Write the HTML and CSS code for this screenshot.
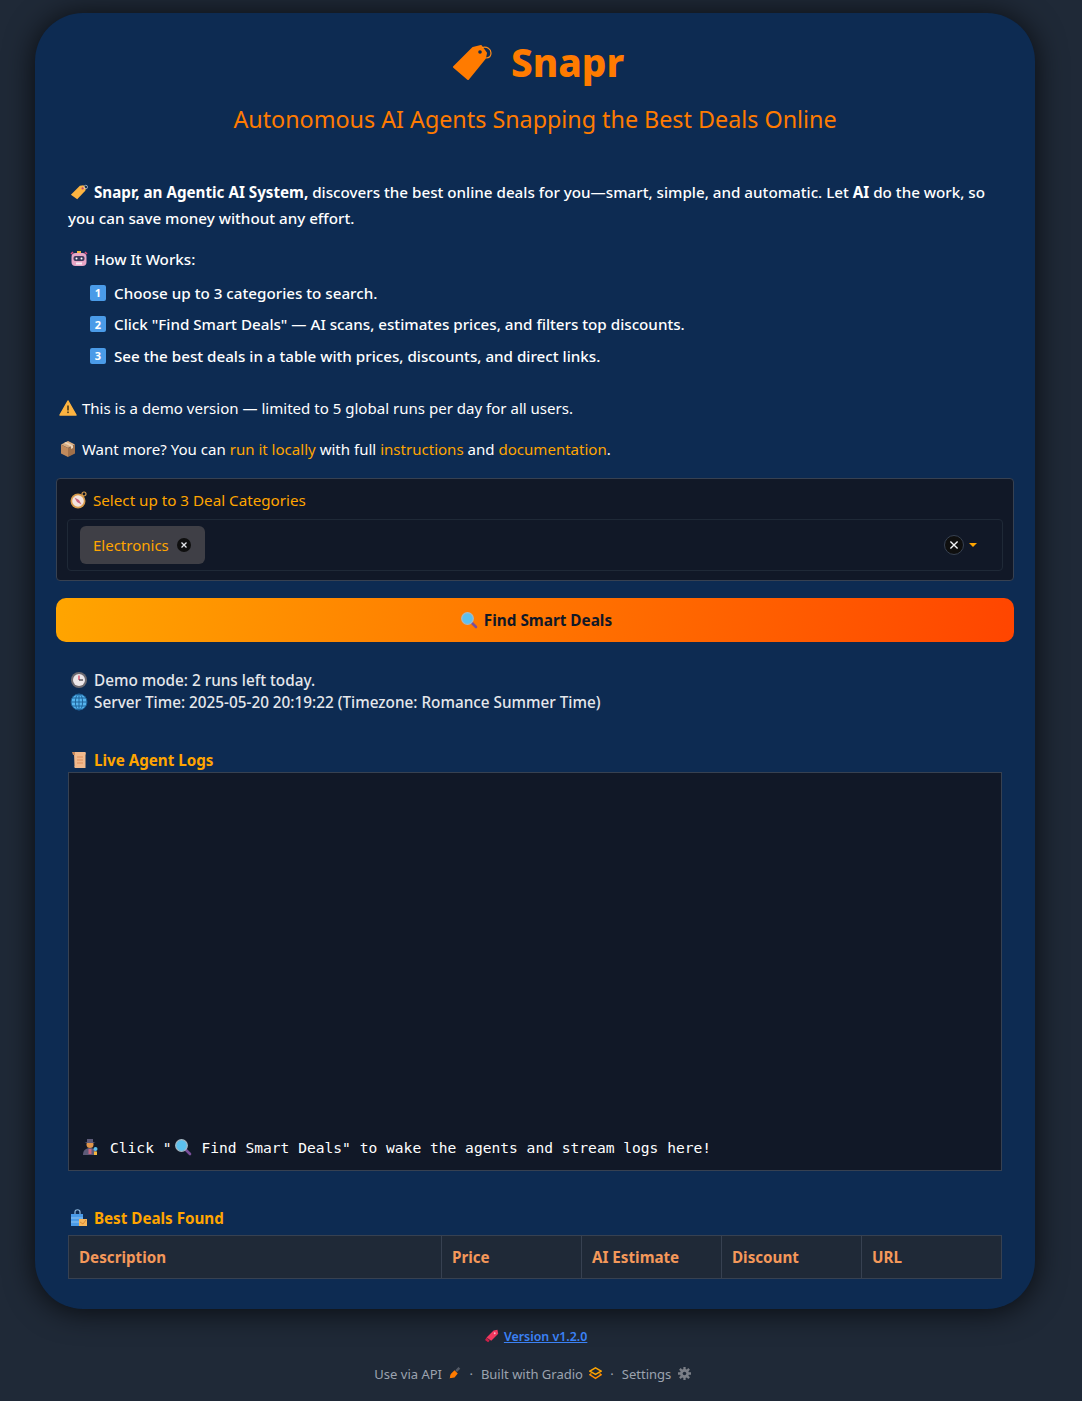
FILE: index.html
```html
<!DOCTYPE html>
<html lang="en">
<head>
  <meta charset="UTF-8">
  <title>Snapr</title>
  <link rel="stylesheet" href="styles.css">
</head>
<body>

  <div class="container">

    <div class="title-row">
      <svg class="title-icon" viewBox="0 0 40 36">
        <path d="M1 22 20 3 28 1 33 8 32 13 15 34Z" fill="#ff7b00" stroke="#ff7b00" stroke-linejoin="round" stroke-width="2"/>
        <circle cx="27" cy="7" r="1.800" fill="#0d2b52"/>
        <path d="M29 2.500C34 1 38 4 38 8 38 11 36 13 33 13" fill="none" stroke="#ff8c1a" stroke-width="1.200"/>
      </svg>
      <h1>Snapr</h1>
    </div>
    <h2>Autonomous AI Agents Snapping the Best Deals Online</h2>

    <div class="intro">
      <p class="intro-text">
        <svg class="emoji" viewBox="0 0 40 36"><path d="M2 24 22 4 30 3 35 10 34 15 16 34Z" fill="#fdb441"/><circle cx="28" cy="10" r="2.500" fill="#c2456e"/><circle cx="35" cy="7" r="4" fill="none" stroke="#cfd8dc" stroke-width="1.500"/></svg>
        <b>Snapr, an Agentic AI System,</b> discovers the best online deals for you—smart, simple, and automatic. Let <b>AI</b> do the work, so you can save money without any effort.
      </p>
      <p class="how">
        <svg class="emoji" viewBox="0 0 18 18"><path d="M1 4 3 2M17 4 15 2" stroke="#e0487a" stroke-width="1.500"/><rect x="7" y="1" width="4" height="2" fill="#f5b83d"/><rect x="1.500" y="3" width="15" height="13" rx="4" fill="#e7a6c6"/><rect x="3.500" y="6" width="11" height="5" rx="2" fill="#3d3a5c"/><circle cx="6.500" cy="8.500" r="1" fill="#fff"/><circle cx="11.500" cy="8.500" r="1" fill="#fff"/><rect x="6" y="12.500" width="6" height="2" fill="#f7eef5"/></svg>
        How It Works:
      </p>
      <ul class="steps">
        <li><span class="keycap">1</span>Choose up to 3 categories to search.</li>
        <li><span class="keycap">2</span>Click "Find Smart Deals" — AI scans, estimates prices, and filters top discounts.</li>
        <li><span class="keycap">3</span>See the best deals in a table with prices, discounts, and direct links.</li>
      </ul>
    </div>

    <p class="note note-first">
      <svg class="emoji" viewBox="0 0 18 18"><path d="M9 2 17 16H1Z" fill="#fdb441" stroke="#fdb441" stroke-linejoin="round" stroke-width="1.500"/><rect x="8.200" y="6.500" width="1.600" height="5" fill="#4a3a1a"/><rect x="8.200" y="12.500" width="1.600" height="1.600" fill="#4a3a1a"/></svg>
      This is a demo version — limited to 5 global runs per day for all users.
    </p>
    <p class="note">
      <svg class="emoji" viewBox="0 0 18 18"><path d="M9 1 16 4.500 9 8 2 4.500Z" fill="#d9ad82"/><path d="M2 4.500 9 8V17L2 13.500Z" fill="#c08a5c"/><path d="M16 4.500 9 8V17L16 13.500Z" fill="#a0704a"/><path d="M5 3 12 6.500V9L14 8V5.500L7 2Z" fill="#ecd4b8"/></svg>
      Want more? You can <a href="#">run it locally</a> with full <a href="#">instructions</a> and <a href="#">documentation</a>.
    </p>

    <div class="category-panel">
      <div class="category-label">
        <svg class="emoji" viewBox="0 0 18 18"><circle cx="9" cy="10" r="7.500" fill="#d69a4a"/><circle cx="9" cy="10" r="5.800" fill="#f3e3de"/><path d="M5.500 6.500 10 9 12.500 13.500 8 11Z" fill="#c9647e"/><circle cx="15" cy="3" r="2" fill="none" stroke="#d69a4a" stroke-width="1.200"/></svg>
        Select up to 3 Deal Categories
      </div>
      <div class="category-input">
        <span class="chip">Electronics
          <span class="chip-x"><svg viewBox="0 0 14 14"><path d="M4.500 4.500 9.500 9.500M9.500 4.500 4.500 9.500" stroke="#e5e7eb" stroke-width="1.300"/></svg></span>
        </span>
        <span class="clear-all"><svg viewBox="0 0 20 20"><path d="M6 6 14 14M14 6 6 14" stroke="#f3f4f6" stroke-width="1.500"/></svg></span>
        <span class="caret"></span>
      </div>
    </div>

    <button class="find-btn">
      <svg class="emoji" viewBox="0 0 18 18"><path d="M11 11 16 16" stroke="#7a4f9a" stroke-width="2.600" stroke-linecap="round"/><circle cx="7.500" cy="7.500" r="5.800" fill="#5cc0ee" stroke="#a6b8c4" stroke-width="1.300"/></svg>
      Find Smart Deals
    </button>

    <div class="status">
      <div>
        <svg class="emoji" viewBox="0 0 18 18"><circle cx="9" cy="9" r="8" fill="#6d6a70"/><circle cx="9" cy="9" r="6" fill="#ece7ea"/><path d="M9 4.500V9" stroke="#d8455f" stroke-width="1.300"/><path d="M9 9H13" stroke="#44424a" stroke-width="1.300"/></svg>
        Demo mode: 2 runs left today.
      </div>
      <div>
        <svg class="emoji" viewBox="0 0 18 18"><circle cx="9" cy="9" r="8" fill="#55b4ee"/><g fill="none" stroke="#1b5e94" stroke-width=".9"><circle cx="9" cy="9" r="8"/><ellipse cx="9" cy="9" rx="3.600" ry="8"/><path d="M1 9H17M2.200 5H15.800M2.200 13H15.800M9 1V17"/></g></svg>
        Server Time: 2025-05-20 20:19:22 (Timezone: Romance Summer Time)
      </div>
    </div>

    <h3 class="section-title section-logs">
      <svg class="emoji" viewBox="0 0 18 18"><path d="M4 1H15C16 1 16 3 15.500 4V17H6C4.500 17 4 16 4.500 15Z" fill="#f1b98c"/><path d="M2 1H5V4H3Z" fill="#c9895a"/><path d="M7 6H13M7 9H13M7 12H13" stroke="#e08f5c" stroke-width="1.200"/></svg>
      Live Agent Logs
    </h3>
    <div class="log-box">
      <div class="log-line"><svg class="emoji log-agent" viewBox="0 0 18 18"><path d="M2 17C2 12 5 10 9 10S16 12 16 17Z" fill="#5d5a78"/><circle cx="9" cy="6.500" r="3.500" fill="#e0954a"/><path d="M3.500 5H14.500L12 4V1H6V4Z" fill="#5d5a78"/><rect x="7.500" y="11" width="3" height="5" fill="#c9647e"/><circle cx="14.500" cy="11" r="2" fill="#5cc0ee"/><rect x="13" y="13.500" width="3" height="3.500" fill="#f5b83d"/></svg>Click "<svg class="emoji log-search" viewBox="0 0 18 18"><path d="M11 11 16 16" stroke="#7a4f9a" stroke-width="2.600" stroke-linecap="round"/><circle cx="7.500" cy="7.500" r="5.800" fill="#5cc0ee" stroke="#a6b8c4" stroke-width="1.300"/></svg>Find Smart Deals" to wake the agents and stream logs here!</div>
    </div>

    <h3 class="section-title section-deals">
      <svg class="emoji" viewBox="0 0 18 18"><path d="M5 5V3C5 0 10 0 10 3V5" fill="none" stroke="#8fb8dc" stroke-width="1.200"/><rect x="1" y="5" width="12" height="12" fill="#4a9be8"/><path d="M1 9H13M1 13H13" stroke="#8ec5f2"/><rect x="9" y="10" width="8" height="7" fill="#f5b55a"/><path d="M10 13 13 15 16 11" fill="none" stroke="#d98a3a"/></svg>
      Best Deals Found
    </h3>
    <table class="deals-table">
      <thead>
        <tr>
          <th class="col-desc">Description</th>
          <th>Price</th>
          <th>AI Estimate</th>
          <th>Discount</th>
          <th>URL</th>
        </tr>
      </thead>
    </table>

  </div>

  <div class="version">
    <svg class="emoji" viewBox="0 0 18 18"><path d="M2 11 11 2 16 1 17 6 8 15Z" fill="#f0385f"/><path d="M2 11 6 15 4 17 0 14Z" fill="#c92048"/><circle cx="12.500" cy="5.500" r="1.200" fill="#f9b6c6"/></svg>
    <a href="#">Version v1.2.0</a>
  </div>

  <div class="footer">
    <span>Use via API
      <svg class="foot-icon" viewBox="0 0 16 16"><path d="M10 5 14 1" stroke="#555b66" stroke-width="3"/><path d="M8 4 12 8 8 13C5 14 3 13 2 14 3 12 2 10 4 8Z" fill="#ff7b00"/></svg>
    </span>
    <span class="dot">·</span>
    <span>Built with Gradio
      <svg class="foot-icon" viewBox="0 0 16 16"><path d="M8 1 15 5 8 9 1 5Z" fill="none" stroke="#ffa500" stroke-width="1.800"/><path d="M3 8 1 9.500 8 14 15 9.500 13 8" fill="none" stroke="#ff8c00" stroke-width="1.800"/></svg>
    </span>
    <span class="dot">·</span>
    <span>Settings
      <svg class="foot-icon" viewBox="0 0 16 16"><path d="M8 0V16M0 8H16M2.300 2.300 13.700 13.700M2.300 13.700 13.700 2.300" stroke="#7b7f87" stroke-width="2.800"/><circle cx="8" cy="8" r="5.500" fill="#7b7f87"/><circle cx="8" cy="8" r="2.200" fill="#1f2937"/></svg>
    </span>
  </div>

</body>
</html>
```

FILE: styles.css
```css
* {
  box-sizing: border-box;
}

body {
  margin: 0;
  height: 1401px;
  background-color: #1f2937;
  font-family: "Noto Sans", "Open Sans", Arial, sans-serif;
  font-size: 15.200px;
  color: #fff;
  overflow: hidden;
}

.container {
  width: 1000px;
  height: 1296px;
  margin: 13px 0 0 35px;
  padding: 28px 21px 0 21px;
  background-color: #0d2b52;
  border-radius: 48px;
  box-shadow: 0 2px 30px rgba(0, 0, 0, 0.75);
}

.title-row {
  display: flex;
  justify-content: center;
  align-items: center;
  height: 44px;
  gap: 18px;
  margin-left: 7px;
}

.title-icon {
  width: 40px;
  height: 36px;
}

h1 {
  margin: -2px 0 0;
  font-size: 38.700px;
  font-weight: 800;
  color: #ff7b00;
}

h2 {
  margin: 18px 0 0;
  font-size: 23.300px;
  line-height: 32px;
  font-weight: 400;
  text-align: center;
  color: #ff7b00;
}

.emoji {
  display: inline-block;
  width: 18px;
  height: 18px;
  margin-right: 2px;
  vertical-align: -3px;
}

.intro {
  padding: 0 12px;
  margin-top: 44px;
  font-weight: 500;
}

.intro p {
  margin: 0;
}

.intro-text {
  line-height: 26px;
}

.intro-text .emoji {
  margin-left: 2px;
}

.intro .how {
  margin-top: 15px;
  padding-left: 2px;
  line-height: 26px;
}

.steps {
  list-style: none;
  margin: 5px 0 0;
  padding: 0 0 0 22px;
}

.steps li {
  display: flex;
  align-items: center;
  height: 31.500px;
}

.keycap {
  display: inline-flex;
  justify-content: center;
  align-items: center;
  width: 16px;
  height: 16px;
  margin-right: 8px;
  border-radius: 2px;
  background-color: #4a9be8;
  font-size: 11px;
  font-weight: 700;
}

.note {
  margin: 15px 0 0;
  padding-left: 3px;
  font-size: 15.050px;
  line-height: 26px;
}

.note .emoji {
  margin-right: 1px;
}

.note-first {
  margin-top: 23px;
}

.note a {
  color: #ffa500;
  text-decoration: none;
}

.category-panel {
  height: 103px;
  margin-top: 16px;
  padding: 10px 10px 0;
  background-color: #111827;
  border: 1px solid #374151;
  border-radius: 4px;
}

.category-label {
  padding-left: 2px;
  line-height: 22px;
  color: #ffa500;
}

.category-input {
  display: flex;
  align-items: center;
  height: 52px;
  margin-top: 8px;
  padding: 0 25px 0 12px;
  border: 1px solid #1f2937;
  border-radius: 4px;
}

.chip {
  display: inline-flex;
  align-items: center;
  gap: 8px;
  height: 38px;
  padding: 0 14px 0 13px;
  background-color: #3f3f46;
  border-radius: 6px;
  font-size: 15px;
  color: #ffa500;
}

.chip-x {
  display: inline-block;
  width: 14px;
  height: 14px;
  background-color: #0f0f0f;
  border-radius: 50%;
}

.chip-x svg {
  display: block;
}

.clear-all {
  width: 20px;
  height: 20px;
  margin-left: auto;
  background-color: #0f0f0f;
  border: 1px solid #374151;
  border-radius: 50%;
}

.clear-all svg {
  display: block;
  width: 18px;
  height: 18px;
}

.caret {
  width: 0;
  height: 0;
  margin-left: 5px;
  margin-top: 1px;
  border-left: 4px solid transparent;
  border-right: 4px solid transparent;
  border-top: 4px solid #ffa500;
}

.find-btn {
  display: block;
  width: 958px;
  height: 44px;
  margin-top: 17px;
  padding: 0 0 0 2px;
  border: none;
  border-radius: 10px;
  background: linear-gradient(100deg, #ffa500, #ff4500);
  font-family: inherit;
  font-size: 15.300px;
  font-weight: 700;
  color: #111827;
  text-align: center;
  cursor: pointer;
}

.status {
  margin-top: 27px;
  padding-left: 14px;
  font-size: 15.300px;
  font-weight: 500;
  line-height: 22px;
  color: #e5e7eb;
}

.section-title {
  margin: 0;
  padding-left: 14px;
  font-size: 15.200px;
  line-height: 24px;
  font-weight: 700;
  color: #ffa500;
}

.section-logs {
  margin-top: 35px;
}

.log-box {
  display: flex;
  align-items: flex-end;
  width: 934px;
  height: 399px;
  margin: 0 0 0 12px;
  padding: 0 12px 11px;
  background-color: #111827;
  border: 1px solid #374151;
}

.log-line {
  font-family: "DejaVu Sans Mono", "Liberation Mono", monospace;
  font-size: 14.600px;
  line-height: 22px;
  white-space: nowrap;
}

.log-agent {
  margin-right: 11px;
}

.log-search {
  margin: 0 10px 0 2px;
}

.section-deals {
  margin-top: 35px;
}

.deals-table {
  width: 934px;
  margin: 5px 0 0 12px;
  border-collapse: collapse;
  table-layout: fixed;
}

.deals-table th {
  width: 140px;
  height: 43px;
  padding: 0 10px;
  background-color: #1f2937;
  border: 1px solid #374151;
  font-weight: 700;
  text-align: left;
  color: #f4985a;
}

.deals-table .col-desc {
  width: 373px;
}

.version {
  margin-top: 17px;
  margin-right: 10px;
  font-size: 12.400px;
  font-weight: 600;
  line-height: 22px;
  text-align: center;
}

.version .emoji {
  width: 14px;
  height: 14px;
  vertical-align: -2px;
}

.version a {
  color: #3b82f6;
}

.footer {
  display: flex;
  justify-content: center;
  gap: 8px;
  margin-top: 16px;
  margin-right: 17px;
  font-size: 13px;
  line-height: 20px;
  color: #9ca3af;
}

.foot-icon {
  display: inline-block;
  width: 13px;
  height: 13px;
  margin-left: 3px;
  vertical-align: -1px;
}
```
